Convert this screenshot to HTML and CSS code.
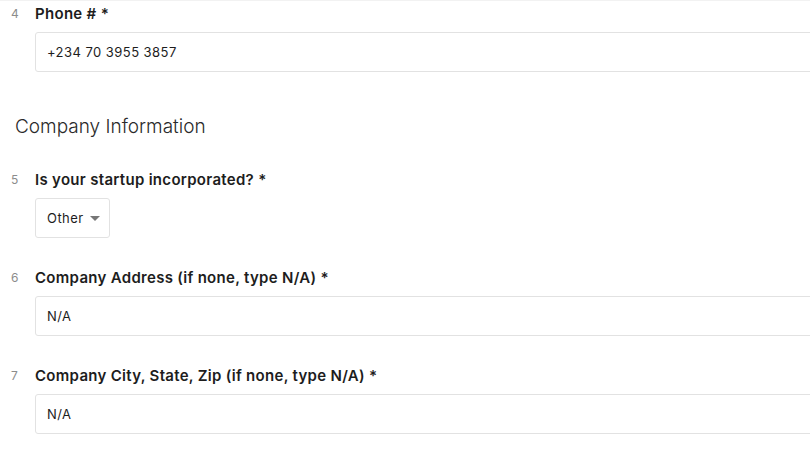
FILE: index.html
```html
<!DOCTYPE html>
<html>
<head>
<meta charset="utf-8">
<link rel="stylesheet" href="styles.css">
</head>
<body>
<div class="page">
  <div class="question">
    <div class="num">4</div>
    <div class="body">
      <div class="label">Phone # *</div>
      <div class="input">+234 70 3955 3857</div>
    </div>
  </div>

  <h2 class="section">Company Information</h2>

  <div class="question">
    <div class="num">5</div>
    <div class="body">
      <div class="label">Is your startup incorporated? *</div>
      <div class="select">Other <span class="caret"></span></div>
    </div>
  </div>

  <div class="question">
    <div class="num">6</div>
    <div class="body">
      <div class="label">Company Address (if none, type N/A) *</div>
      <div class="input">N/A</div>
    </div>
  </div>

  <div class="question">
    <div class="num">7</div>
    <div class="body">
      <div class="label">Company City, State, Zip (if none, type N/A) *</div>
      <div class="input">N/A</div>
    </div>
  </div>
</div>
</body>
</html>
```

FILE: styles.css
```css
html, body {
  margin: 0;
  padding: 0;
  background: #ffffff;
  overflow: hidden;
}
body {
  font-family: Inter, "Liberation Sans", Arial, sans-serif;
  color: #1f1f1f;
  width: 810px;
  height: 450px;
}
.page {
  border-top: 1px solid #f2f2f2;
  padding-top: 3px;
  width: 900px;
}
.question {
  display: flex;
  align-items: flex-start;
  margin-bottom: 30px;
}
.num {
  width: 35px;
  box-sizing: border-box;
  padding-left: 11px;
  font-size: 12px;
  line-height: 20px;
  color: #8c8c8c;
}
.body {
  flex: 1;
}
.label {
  font-size: 15px;
  font-weight: 600;
  line-height: 20px;
  letter-spacing: 0.3px;
  color: #1d1d1d;
  margin-bottom: 8px;
}
.input {
  height: 40px;
  box-sizing: border-box;
  border: 1px solid #e2e2e2;
  border-radius: 3px;
  padding: 0 11px;
  font-size: 13px;
  letter-spacing: 0.45px;
  line-height: 38px;
  color: #1d1d1d;
}
.select {
  display: inline-flex;
  align-items: center;
  gap: 6px;
  height: 40px;
  box-sizing: border-box;
  border: 1px solid #e2e2e2;
  border-radius: 3px;
  padding: 0 9px 0 11px;
  font-size: 13px;
  letter-spacing: 0.45px;
  color: #1d1d1d;
}
.caret {
  width: 0;
  height: 0;
  border-left: 5px solid transparent;
  border-right: 5px solid transparent;
  border-top: 5px solid #777;
  margin-top: 1px;
}
.section {
  margin: 41px 0 29px 15px;
  font-size: 19px;
  font-weight: 300;
  line-height: 28px;
  color: #2a2a2a;
}
```
